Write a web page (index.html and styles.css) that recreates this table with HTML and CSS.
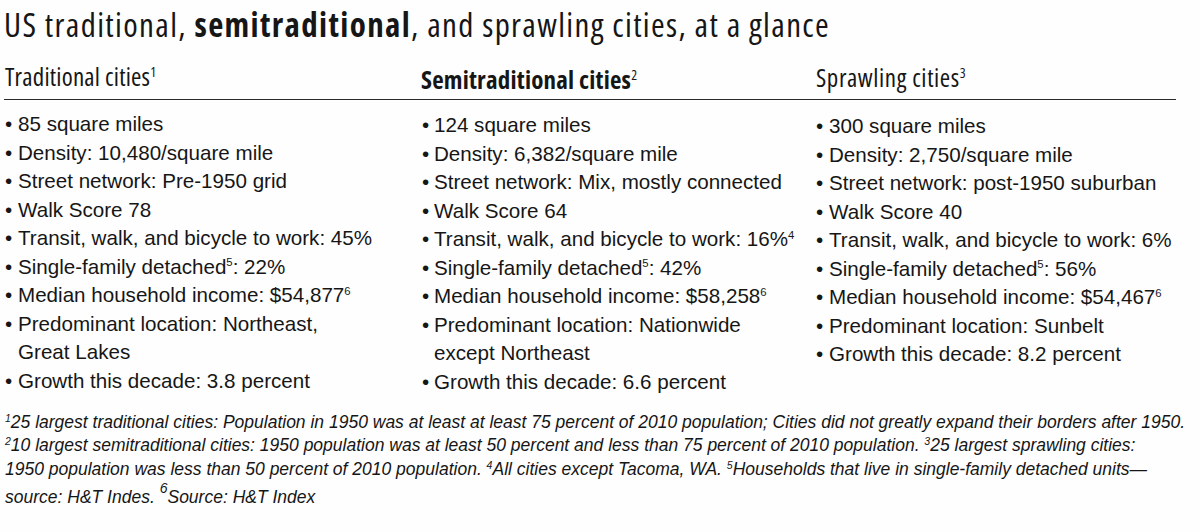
FILE: index.html
```html
<!DOCTYPE html>
<html lang="en">
<head>
<meta charset="utf-8">
<title>US traditional, semitraditional, and sprawling cities</title>
<link rel="stylesheet" href="styles.css">
</head>
<body>
<div class="page">
  <h1 class="title">US traditional, <b>semitraditional</b>, and sprawling cities, at a glance</h1>
  <div class="table">
    <div class="heads">
      <div class="head h1c">Traditional cities<sup>1</sup></div>
      <div class="head h2c"><b>Semitraditional cities</b><sup>2</sup></div>
      <div class="head h3c">Sprawling cities<sup>3</sup></div>
    </div>
    <div class="cols">
      <ul class="list l1">
        <li>85 square miles</li>
        <li>Density: 10,480/square mile</li>
        <li>Street network: Pre-1950 grid</li>
        <li>Walk Score 78</li>
        <li>Transit, walk, and bicycle to work: 45%</li>
        <li>Single-family detached<sup>5</sup>: 22%</li>
        <li>Median household income: $54,877<sup>6</sup></li>
        <li>Predominant location: Northeast,<br>Great Lakes</li>
        <li>Growth this decade: 3.8 percent</li>
      </ul>
      <ul class="list l2">
        <li>124 square miles</li>
        <li>Density: 6,382/square mile</li>
        <li>Street network: Mix, mostly connected</li>
        <li>Walk Score 64</li>
        <li>Transit, walk, and bicycle to work: 16%<sup>4</sup></li>
        <li>Single-family detached<sup>5</sup>: 42%</li>
        <li>Median household income: $58,258<sup>6</sup></li>
        <li>Predominant location: Nationwide<br>except Northeast</li>
        <li>Growth this decade: 6.6 percent</li>
      </ul>
      <ul class="list l3">
        <li>300 square miles</li>
        <li>Density: 2,750/square mile</li>
        <li>Street network: post-1950 suburban</li>
        <li>Walk Score 40</li>
        <li>Transit, walk, and bicycle to work: 6%</li>
        <li>Single-family detached<sup>5</sup>: 56%</li>
        <li>Median household income: $54,467<sup>6</sup></li>
        <li>Predominant location: Sunbelt</li>
        <li>Growth this decade: 8.2 percent</li>
      </ul>
    </div>
  </div>
  <p class="notes">
    <span class="ln"><sup>1</sup>25 largest traditional cities: Population in 1950 was at least at least 75 percent of 2010 population; Cities did not greatly expand their borders after 1950.</span>
    <span class="ln"><sup>2</sup>10 largest semitraditional cities: 1950 population was at least 50 percent and less than 75 percent of 2010 population. <sup>3</sup>25 largest sprawling cities:</span>
    <span class="ln">1950 population was less than 50 percent of 2010 population. <sup>4</sup>All cities except Tacoma, WA. <sup>5</sup>Households that live in single-family detached units—</span>
    <span class="ln last">source: H&amp;T Indes. <sup class="big">6</sup>Source: H&amp;T Index</span>
  </p>
</div>
</body>
</html>
```

FILE: styles.css
```css
html, body {
  margin: 0;
  padding: 0;
  background: #fefefe;
}
body {
  font-family: "Liberation Sans", Arial, sans-serif;
  color: #161616;
}
.page {
  width: 1200px;
  height: 532px;
  padding: 5px 0 0 4px;
  box-sizing: border-box;
  overflow: hidden;
}
.title {
  margin: 0;
  font-family: "Open Sans", sans-serif;
  font-stretch: 75%;
  font-size: 33px;
  font-weight: normal;
  line-height: 39px;
  letter-spacing: 1.35px;
}
.title b {
  font-weight: 700;
}
.table {
  width: 1172px;
  margin-top: 18px;
}
.heads {
  display: grid;
  grid-template-columns: 416px 395px 1fr;
  border-bottom: 1.5px solid #2a2a2a;
  height: 38px;
  box-sizing: border-box;
  align-items: start;
}
.head {
  font-family: "Open Sans", sans-serif;
  font-stretch: 75%;
  font-size: 25px;
  line-height: 28px;
  letter-spacing: 0.2px;
  padding-left: 1px;
}
.head b {
  font-weight: 700;
}
.h2c {
  padding-top: 3px;
}
.h3c {
  padding-top: 1px;
  letter-spacing: 0.6px;
}
.head sup, .list sup {
  font-size: 0.55em;
  vertical-align: 0;
  position: relative;
  top: -0.65em;
  line-height: 0;
}
.cols {
  display: grid;
  grid-template-columns: 417px 394px 1fr;
  padding-top: 10px;
}
.list {
  list-style: none;
  margin: 0;
  padding: 0;
  font-size: 20.6px;
  line-height: 28.5px;
}
.l2 { padding-top: 1px; }
.l3 { padding-top: 2px; }
.list li {
  padding-left: 14px;
  position: relative;
}
.l2 li { padding-left: 13px; }
.list li::before {
  content: "\2022";
  position: absolute;
  left: 1px;
  top: 0;
}
.notes {
  margin: 15px 0 0 1px;
  font-style: italic;
  font-size: 17.5px;
  line-height: 23.4px;
  white-space: nowrap;
}
.ln {
  display: block;
}
.ln.last {
  margin-top: 5px;
}
.notes sup {
  font-size: 0.6em;
  vertical-align: 0;
  position: relative;
  top: -0.6em;
  line-height: 0;
}
.notes sup.big {
  font-size: 0.8em;
  top: -0.75em;
}
```
